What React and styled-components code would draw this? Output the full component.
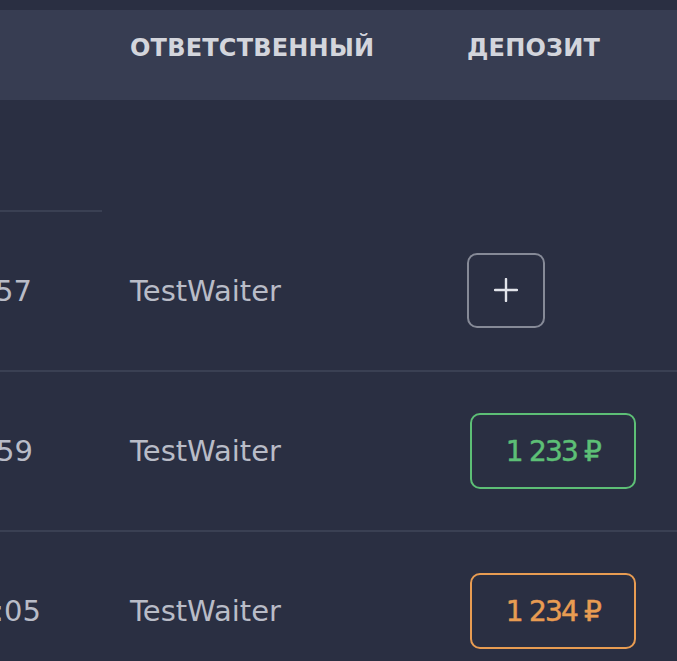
import React from "react";
import styled, { createGlobalStyle } from "styled-components";

const GlobalStyle = createGlobalStyle`
  html, body {
    margin: 0;
    padding: 0;
    background: #2a2f42;
  }
  body {
    font-family: "DejaVu Sans", "Liberation Sans", sans-serif;
  }
`;

const Page = styled.div`
  width: 677px;
  height: 661px;
  overflow: hidden;
  background: #2a2f42;
  padding-top: 10px;
  box-sizing: border-box;
`;

const Grid = styled.div`
  display: grid;
  grid-template-columns: 102px 365px 1fr;
`;

const HeadCell = styled.div`
  height: 90px;
  box-sizing: border-box;
  background: #373d52;
  padding: 23px 0 0 ${(p) => p.$pad || 0}px;
  color: #d3d5dc;
  font-size: 24px;
  font-weight: bold;
  line-height: 30px;
  letter-spacing: 0.2px;
  text-transform: uppercase;
  white-space: nowrap;
`;

const GroupCell = styled.div`
  height: 112px;
  box-sizing: border-box;
  border-bottom: ${(p) => (p.$line ? "2px solid #3a4053" : "none")};
`;

const Cell = styled.div`
  height: 160px;
  box-sizing: border-box;
  border-bottom: 2px solid #3a4053;
  display: flex;
  align-items: center;
  padding-left: ${(p) => p.$pad || 0}px;
  color: #b9bcc7;
  font-size: 29px;
  white-space: nowrap;
  overflow: hidden;
`;

const TimeCell = styled(Cell)`
  justify-content: flex-end;
  padding-right: ${(p) => p.$end}px;
`;

const AddButton = styled.button`
  width: 78px;
  height: 75px;
  box-sizing: border-box;
  border: 2px solid #868a97;
  border-radius: 10px;
  background: transparent;
  display: flex;
  align-items: center;
  justify-content: center;
  padding: 0;
  margin-top: -2px;
  cursor: pointer;
`;

const Deposit = styled.div`
  width: 166px;
  height: 76px;
  margin-left: 3px;
  box-sizing: border-box;
  border: 2px solid ${(p) => p.$color};
  border-radius: 10px;
  color: ${(p) => p.$color};
  display: flex;
  align-items: center;
  justify-content: center;
  font-size: 28px;
  letter-spacing: -1.8px;
  -webkit-text-stroke: 0.5px ${(p) => p.$color};
`;

const Plus = () => (
  <svg width="24" height="24" viewBox="0 0 24 24">
    <path d="M12 1v22M1 12h22" stroke="#e2e4ea" strokeWidth="2.4" strokeLinecap="round" />
  </svg>
);

const rows = [
  { time: "12:40:57", end: 70, waiter: "TestWaiter", deposit: null },
  { time: "12:41:59", end: 69, waiter: "TestWaiter", deposit: "1 233 ₽", color: "#5dbf76" },
  { time: "12:1:05", end: 61, waiter: "TestWaiter", deposit: "1 234 ₽", color: "#e89c52" },
];

export default function App() {
  return (
    <Page>
      <GlobalStyle />
      <Grid>
        <HeadCell />
        <HeadCell $pad={28}>Ответственный</HeadCell>
        <HeadCell>Депозит</HeadCell>

        <GroupCell $line />
        <GroupCell />
        <GroupCell />

        {rows.map((r, i) => (
          <React.Fragment key={i}>
            <TimeCell $end={r.end}>{r.time}</TimeCell>
            <Cell $pad={28}>{r.waiter}</Cell>
            <Cell>
              {r.deposit ? (
                <Deposit $color={r.color}>{r.deposit}</Deposit>
              ) : (
                <AddButton>
                  <Plus />
                </AddButton>
              )}
            </Cell>
          </React.Fragment>
        ))}
      </Grid>
    </Page>
  );
}
